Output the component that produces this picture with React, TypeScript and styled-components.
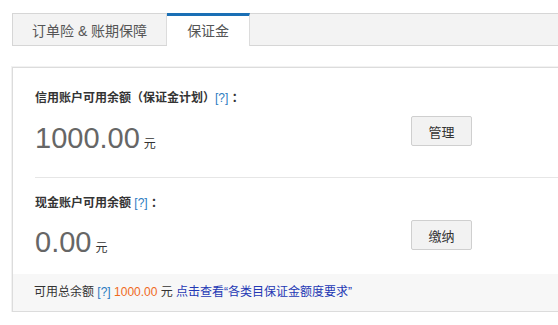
import styled, { createGlobalStyle } from "styled-components";

const GlobalStyle = createGlobalStyle`
  html, body {
    margin: 0;
    padding: 0;
    background: #fff;
    overflow: hidden;
  }
  body {
    font-family: "Liberation Sans", "Noto Sans CJK SC", sans-serif;
    font-size: 12px;
    color: #333;
  }
`;

const Page = styled.div`
  width: 720px;
  padding: 13px 0 0 12px;
  box-sizing: border-box;
`;

// --- 탭 ---
const TabBar = styled.div`
  display: flex;
  height: 33px;
  background: #f3f3f3;
  border: 1px solid #d6d6d6;
  box-sizing: border-box;
`;

const Tab = styled.div<{ $active?: boolean }>`
  display: flex;
  align-items: center;
  padding: 0 ${(p) => (p.$active ? "20px" : "19px")};
  font-size: 14px;
  color: #555;
  border-right: 1px solid #dcdcdc;
  cursor: pointer;
  background: ${(p) => (p.$active ? "#fff" : "transparent")};
  margin: ${(p) => (p.$active ? "-1px 0 -1px" : "0")};
  border-top: ${(p) => (p.$active ? "3px solid #1a6fb5" : "none")};
  padding-bottom: ${(p) => (p.$active ? "2px" : "0")};
`;

// --- 패널 ---
const Panel = styled.div`
  margin-top: 21px;
  border: 1px solid #dcdcdc;
  box-shadow: 0 0 0 1px #f2f2f2;
`;

const Body = styled.div`
  padding: 5px 0 0 22px;
`;

const Section = styled.div`
  display: flex;
  flex-direction: column;
  gap: 12px;
  padding: 16px 0 14px;

  &:first-child {
    gap: 13px;
    padding-bottom: 21px;
    border-bottom: 1px solid #e6e6e6;
  }
`;

const Label = styled.div`
  line-height: 18px;
  font-weight: bold;
  color: #333;
`;

const Help = styled.a`
  color: #2b7bbf;
  font-weight: normal;
  text-decoration: none;
`;

const AmountRow = styled.div`
  display: flex;
  align-items: flex-start;
`;

const Amount = styled.div`
  width: 376px;
  height: 36px;
  line-height: 36px;
  font-size: 29px;
  color: #666;

  small {
    font-size: 12px;
    color: #333;
    margin-left: 4px;
  }
`;

const Button = styled.button`
  width: 61px;
  height: 30px;
  margin-top: -4px;
  padding: 0;
  font-family: "Noto Sans CJK SC", sans-serif;
  font-size: 13px;
  color: #333;
  background: #f2f2f2;
  border: 1px solid #cfcfcf;
  border-radius: 2px;
  cursor: pointer;
`;

const Footer = styled.div`
  height: 37px;
  line-height: 37px;
  padding-left: 21px;
  background: #f7f7f7;
  color: #333;
`;

const Orange = styled.span`
  color: #f06a1c;
`;

const Link = styled.a`
  color: #2438b4;
  text-decoration: none;
`;

const App = () => {
  const sections = [
    { label: "信用账户可用余额（保证金计划）", amount: "1000.00", action: "管理" },
    { label: "现金账户可用余额 ", amount: "0.00", action: "缴纳" },
  ];

  return (
    <Page>
      <GlobalStyle />
      <TabBar>
        <Tab>订单险 &amp; 账期保障</Tab>
        <Tab $active>保证金</Tab>
      </TabBar>

      <Panel>
        <Body>
          {sections.map((s) => (
            <Section key={s.action}>
              <Label>
                {s.label}
                <Help href="#">[?]</Help> ：
              </Label>
              <AmountRow>
                <Amount>
                  {s.amount}
                  <small>元</small>
                </Amount>
                <Button>{s.action}</Button>
              </AmountRow>
            </Section>
          ))}
        </Body>
        <Footer>
          可用总余额 <Help href="#">[?]</Help> <Orange>1000.00</Orange> 元{" "}
          <Link href="#">点击查看“各类目保证金额度要求”</Link>
        </Footer>
      </Panel>
    </Page>
  );
};

export default App;
